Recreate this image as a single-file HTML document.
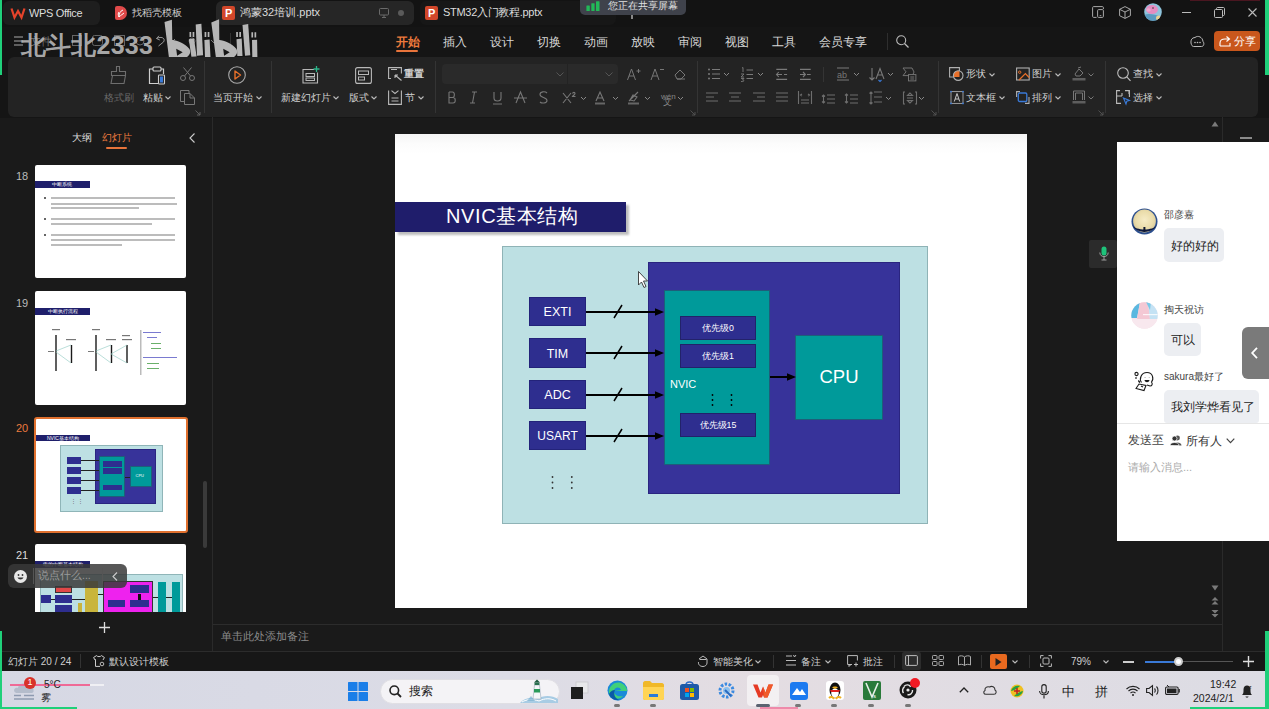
<!DOCTYPE html>
<html><head><meta charset="utf-8">
<style>
*{margin:0;padding:0;box-sizing:border-box}
html,body{width:1269px;height:709px;overflow:hidden;background:#151515;font-family:"Liberation Sans",sans-serif;}
.a{position:absolute}
.t{position:absolute;white-space:nowrap;line-height:1}
svg{position:absolute;overflow:visible}
.ic{fill:none;stroke:#9a9a9a;stroke-width:1.1}
.mn{font-size:12px;color:#d8d8d8;top:36px}
.rb{font-size:10px;color:#d2d2d2}
.sep{position:absolute;width:1px;background:#343434}
.chev{fill:none;stroke:#bbb;stroke-width:1.1}
</style></head><body>
<!-- ===== TITLE BAR ===== -->
<div class="a" style="left:0;top:0;width:1269px;height:27px;background:#131313"></div>
<div class="a" style="left:1190px;top:0;width:70px;height:1px;background:#4a1620"></div>
<div class="a" style="left:0;top:0;width:2px;height:75px;background:#1fd07a"></div>
<div class="a" style="left:1265px;top:0;width:4px;height:75px;background:#1fd07a"></div>
<!-- tab1 -->
<div class="a" style="left:3px;top:1px;width:97px;height:24px;background:#1e1e1e;border-radius:6px"></div>
<svg style="left:11px;top:8px" width="14" height="10" viewBox="0 0 14 10"><path d="M0.5 0.5 L3.5 9.5 L7 3 L10.5 9.5 L13.5 0.5" fill="none" stroke="#e5432b" stroke-width="2.2" stroke-linejoin="miter"/></svg>
<div class="t" style="left:29px;top:8px;font-size:11px;color:#dcdcdc;letter-spacing:-0.35px">WPS Office</div>
<!-- tab2 -->
<div class="a" style="left:115px;top:6px;width:12px;height:14px;background:#e04a4a;border-radius:2px 7px 7px 2px"></div>
<svg style="left:117px;top:9px" width="8" height="9" viewBox="0 0 8 9"><path d="M2 8 C2 5 3 2 6 1 M2 8 C4 6 6 5 7 4 M2 8 C1 6 1 4 2 3" fill="none" stroke="#fff" stroke-width="1"/></svg>
<div class="t" style="left:132px;top:8px;font-size:10px;color:#d0d0d0">找稻壳模板</div>
<!-- tab3 active -->
<div class="a" style="left:216px;top:1px;width:198px;height:24px;background:#262626;border-radius:6px"></div>
<div class="a" style="left:222px;top:6px;width:13px;height:14px;background:#d2472a;border-radius:2px"></div>
<div class="t" style="left:225px;top:8px;font-size:11px;font-weight:bold;color:#fff">P</div>
<div class="t" style="left:240px;top:7px;font-size:11px;color:#dcdcdc">鸿蒙32培训.pptx</div>
<svg style="left:379px;top:8px" width="10" height="10" viewBox="0 0 10 10"><rect x="0.5" y="0.5" width="9" height="6.5" rx="1" fill="none" stroke="#6a6a6a" stroke-width="1"/><path d="M3 9.5 H7 M5 7 V9.5" stroke="#6a6a6a" stroke-width="1"/></svg>
<div class="a" style="left:398px;top:10px;width:6px;height:6px;border-radius:50%;background:#5a5a5a"></div>
<!-- tab4 -->
<div class="a" style="left:420px;top:1px;width:196px;height:24px;background:#171717;border-radius:6px"></div>
<div class="a" style="left:425px;top:6px;width:13px;height:14px;background:#d2472a;border-radius:2px"></div>
<div class="t" style="left:428px;top:8px;font-size:11px;font-weight:bold;color:#fff">P</div>
<div class="t" style="left:443px;top:7px;font-size:11px;color:#dcdcdc;letter-spacing:-0.3px">STM32入门教程.pptx</div>
<!-- sharing popup -->
<div class="a" style="left:580px;top:-4px;width:106px;height:19px;background:#3f424b;border-radius:5px"></div>
<svg style="left:586px;top:1px" width="14" height="11" viewBox="0 0 14 11"><rect x="0.4" y="4.6" width="3.4" height="5.4" rx="0.5" fill="#22b858"/><rect x="5.3" y="2.2" width="3.3" height="7.8" rx="0.5" fill="#22b858"/><rect x="10" y="0.2" width="3.5" height="9.8" rx="0.5" fill="#22b858"/></svg>
<div class="t" style="left:608px;top:1px;font-size:10px;color:#e0e0e0">您正在共享屏幕</div>
<div class="a" style="left:631px;top:15px;width:1.5px;height:4px;background:#888"></div>
<!-- right title icons -->
<svg style="left:1092px;top:6px" width="12" height="12" viewBox="0 0 12 12"><path d="M4.5 11.4 H1.6 C1 11.4 0.6 11 0.6 10.4 V1.6 C0.6 1 1 0.6 1.6 0.6 H10.4 C11 0.6 11.4 1 11.4 1.6 V3" fill="none" stroke="#a8a8a8" stroke-width="1"/><rect x="5.6" y="3.6" width="5.8" height="7.8" rx="1" fill="none" stroke="#a8a8a8" stroke-width="1"/><path d="M7.7 9.6 H9.3" stroke="#a8a8a8" stroke-width="0.9"/></svg>
<svg style="left:1118.5px;top:6px" width="12" height="13" viewBox="0 0 12 13"><path d="M6 0.6 L11.4 3.3 V9.7 L6 12.4 L0.6 9.7 V3.3 Z M0.6 3.3 L6 6 L11.4 3.3 M6 6 V12.4" fill="none" stroke="#a8a8a8" stroke-width="1" stroke-linejoin="round"/></svg>
<svg style="left:1143.5px;top:3px" width="18" height="18" viewBox="0 0 18 18"><defs><clipPath id="avt"><circle cx="9" cy="9" r="8.8"/></clipPath></defs><g clip-path="url(#avt)"><rect width="18" height="18" fill="#8ec4dc"/><path d="M0 12 C4 10 10 11 18 14 V18 H0 Z" fill="#5a9ac0"/><ellipse cx="8" cy="6.5" rx="6" ry="4.5" fill="#e48cc0"/><ellipse cx="4.5" cy="7" rx="2.2" ry="1.8" fill="#f0a8d0"/><circle cx="9" cy="5" r="0.8" fill="#333"/><circle cx="14.5" cy="15" r="2.5" fill="#e8d090"/></g></svg>
<div class="a" style="left:1182px;top:11.5px;width:8.5px;height:1px;background:#bbb"></div>
<svg style="left:1213.5px;top:6.5px" width="11" height="11" viewBox="0 0 11 11"><rect x="0.5" y="2.5" width="8" height="8" rx="1" fill="none" stroke="#bbb" stroke-width="1"/><path d="M2.5 2.5 V1.5 C2.5 1 3 0.5 3.5 0.5 H9.5 C10 0.5 10.5 1 10.5 1.5 V7.5 C10.5 8 10 8.5 9.5 8.5 H8.5" fill="none" stroke="#bbb" stroke-width="1"/></svg>
<svg style="left:1248px;top:8px" width="9" height="9" viewBox="0 0 9 9"><path d="M0.5 0.5 L8.5 8.5 M8.5 0.5 L0.5 8.5" stroke="#bbb" stroke-width="1.1"/></svg>

<!-- ===== MENU ROW ===== -->
<svg style="left:14px;top:36px" width="9" height="10" viewBox="0 0 9 10"><path d="M0 1H9M0 5H9M0 9H9" stroke="#aaa" stroke-width="1.2"/></svg>
<div class="t" style="left:30px;top:36px;font-size:11px;color:#777">文件</div>
<svg style="left:72px;top:35px" width="80" height="12" viewBox="0 0 80 12"><rect x="0.5" y="0.5" width="9" height="10" fill="none" stroke="#666" stroke-width="1"/><rect x="20.5" y="0.5" width="10" height="10" rx="2" fill="none" stroke="#666"/><rect x="42.5" y="0.5" width="10" height="10" fill="none" stroke="#666"/><circle cx="68" cy="6" r="4" fill="none" stroke="#666"/></svg>
<svg style="left:155px;top:35px" width="70" height="12" viewBox="0 0 70 12"><path d="M1.5 3.5 L4 0.8 M1.5 3.5 L4.8 5 M1.5 3.5 C6 1 11 3 8.5 7 L3.5 11" fill="none" stroke="#999" stroke-width="1"/><path d="M16 4 L18 6 L20 4" fill="none" stroke="#888" stroke-width="0.9"/><circle cx="37" cy="6" r="3" fill="none" stroke="#666"/><path d="M56 5 L59 8 L62 5" fill="none" stroke="#888" stroke-width="0.9"/></svg>
<div class="a" style="left:230px;top:33px;width:1px;height:17px;background:#333"></div>
<!-- watermark -->
<div class="t" style="left:21px;top:33px;font-size:25px;font-weight:900;color:rgba(182,182,182,0.93);letter-spacing:0.2px">北斗北2333</div>
<svg style="left:155px;top:15px" width="110" height="50" viewBox="0 0 110 50" fill="#b6b6b6" fill-rule="evenodd">
<path d="M9.5 7 L16.9 4.8 L17.3 25 C22 25.5 30 28 34.5 34 C36 37 35 41 30 43 C25 45 18 45.5 14.3 45.5 Z M21.2 33.8 L27.7 37.3 L22.1 40.7 Z"/>
<path d="M34.5 17 H36.2 V22 H34.5 Z M37.6 17 H39.3 V22 H37.6 Z M33.8 24.3 L39 23.4 L41.6 41.6 L36.4 41.8 Z"/>
<path d="M40.7 9.5 L46.4 8.7 L48.1 40.3 L42 40.7 Z"/>
<path d="M49.6 17 H51.3 V22 H49.6 Z M52.7 17 H54.4 V22 H52.7 Z M49.4 25 L54.6 24.6 L55.5 42.3 L50 42.5 Z"/>
<path d="M56.3 7.4 L64.1 4.3 L64.3 25 C69 25.5 77 28 81.5 34 C83 37 82 41 77 43 C72 45 65 45.5 61.3 45.5 Z M68.2 33.8 L74.7 37.3 L69.1 40.7 Z"/>
<path d="M81.2 17 H82.9 V22 H81.2 Z M84.3 17 H86 V22 H84.3 Z M81.5 24.3 L86.7 23.6 L87.5 40.9 L82.3 41 Z"/>
<path d="M87.5 10 L93.2 9.1 L95.3 40.3 L90 40.7 Z"/>
<path d="M96.4 17.3 H98.1 V22.5 H96.4 Z M99.5 17.3 H101.2 V22.5 H99.5 Z M97 25 L102.1 24.7 L102.4 42.3 L97.3 42.5 Z"/>
</svg>
<!-- menu items -->
<div class="t mn" style="left:396px;color:#ee7a3c;font-weight:bold">开始</div>
<div class="a" style="left:396px;top:50px;width:22px;height:2px;background:#e8743b;border-radius:1px"></div>
<div class="t mn" style="left:443px">插入</div>
<div class="t mn" style="left:490px">设计</div>
<div class="t mn" style="left:537px">切换</div>
<div class="t mn" style="left:584px">动画</div>
<div class="t mn" style="left:631px">放映</div>
<div class="t mn" style="left:678px">审阅</div>
<div class="t mn" style="left:725px">视图</div>
<div class="t mn" style="left:772px">工具</div>
<div class="t mn" style="left:819px">会员专享</div>
<div class="a" style="left:887px;top:33px;width:1px;height:17px;background:#2e2e2e"></div>
<svg style="left:896px;top:35px" width="13" height="13" viewBox="0 0 13 13"><circle cx="5.2" cy="5.2" r="4.5" fill="none" stroke="#bbb" stroke-width="1.1"/><path d="M8.5 8.5 L12.5 12.5" stroke="#bbb" stroke-width="1.2"/></svg>
<svg style="left:1190px;top:35px" width="15" height="12" viewBox="0 0 15 12"><path d="M3.5 11.5 H11.5 C14 11.5 14.5 8 13 6.5 C12.5 2 8 0 5 2.5 C2 2.5 0.5 5 1 8 C1.5 10.5 2.5 11.5 3.5 11.5 Z" fill="none" stroke="#bbb" stroke-width="1"/><circle cx="5" cy="7.5" r="0.8" fill="#bbb"/><circle cx="7.5" cy="7.5" r="0.8" fill="#bbb"/><circle cx="10" cy="7.5" r="0.8" fill="#bbb"/></svg>
<div class="a" style="left:1214px;top:31px;width:46px;height:20px;background:#c9571c;border-radius:4px"></div>
<svg style="left:1219px;top:35px" width="12" height="12" viewBox="0 0 12 12"><path d="M1 11 V8 C1 5 3 4 6 4 H10 M7.5 1.5 L10.5 4 L7.5 6.5 M1 11 H11 V8" fill="none" stroke="#fff" stroke-width="1.1"/></svg>
<div class="t" style="left:1234px;top:36px;font-size:11px;color:#fff">分享</div>
<!-- ===== RIBBON ===== -->
<div class="a" style="left:8px;top:57px;width:1250px;height:60px;background:#232323;border-radius:6px"></div>
<div class="sep" style="left:204px;top:61px;height:52px"></div>
<div class="sep" style="left:271px;top:61px;height:52px"></div>
<div class="sep" style="left:435px;top:61px;height:52px"></div>
<div class="sep" style="left:697px;top:61px;height:52px"></div>
<div class="sep" style="left:823px;top:67px;height:15px"></div>
<div class="sep" style="left:938px;top:61px;height:52px"></div>
<div class="sep" style="left:1105px;top:61px;height:52px"></div>
<svg style="left:195px;top:110px" width="6" height="6" viewBox="0 0 6 6"><path d="M0.5 0.5 L5 5 M5 2 V5 H2" fill="none" stroke="#666" stroke-width="0.9"/></svg>
<svg style="left:690px;top:110px" width="6" height="6" viewBox="0 0 6 6"><path d="M0.5 0.5 L5 5 M5 2 V5 H2" fill="none" stroke="#555" stroke-width="0.9"/></svg>
<svg style="left:931px;top:110px" width="6" height="6" viewBox="0 0 6 6"><path d="M0.5 0.5 L5 5 M5 2 V5 H2" fill="none" stroke="#555" stroke-width="0.9"/></svg>
<svg style="left:1098px;top:110px" width="6" height="6" viewBox="0 0 6 6"><path d="M0.5 0.5 L5 5 M5 2 V5 H2" fill="none" stroke="#555" stroke-width="0.9"/></svg>
<!-- format painter -->
<svg style="left:110px;top:66px" width="17" height="18" viewBox="0 0 17 18"><path d="M6.5 0.5 H9.5 V5.5 H15.5 V9.5 H1.5 V5.5 H6.5 Z M2.5 9.5 L1 17.5 H14 L15.5 9.5" fill="none" stroke="#6e6e6e" stroke-width="1.1"/></svg>
<div class="t rb" style="left:104px;top:93px;color:#6a6a6a">格式刷</div>
<!-- paste -->
<svg style="left:148px;top:66px" width="19" height="19" viewBox="0 0 19 19"><path d="M5 3 H1.5 V17.5 H10 M13 3 H15.5 V8" fill="none" stroke="#cfcfcf" stroke-width="1.2"/><rect x="5" y="1" width="8" height="4" rx="1" fill="none" stroke="#cfcfcf" stroke-width="1.1"/><rect x="10.5" y="9" width="6" height="9" rx="0.8" fill="none" stroke="#cfcfcf" stroke-width="1.1"/><rect x="12" y="10.5" width="3" height="6" fill="#3a7ad8"/></svg>
<div class="t rb" style="left:143px;top:93px">粘贴</div>
<svg style="left:165px;top:96px" width="6" height="4" viewBox="0 0 6 4"><path class="chev" d="M0.5 0.5 L3 3 L5.5 0.5"/></svg>
<!-- scissors / copy -->
<svg style="left:180px;top:67px" width="15" height="14" viewBox="0 0 15 14"><circle cx="3" cy="11" r="2.5" fill="none" stroke="#777" stroke-width="1"/><circle cx="12" cy="11" r="2.5" fill="none" stroke="#777" stroke-width="1"/><path d="M4.5 9 L11.5 0.5 M10.5 9 L3.5 0.5" stroke="#777" stroke-width="1"/></svg>
<svg style="left:180px;top:90px" width="15" height="15" viewBox="0 0 15 15"><path d="M9 3.5 V0.5 H0.5 V11.5 H4" fill="none" stroke="#777" stroke-width="1"/><path d="M4.5 3.5 H10 L14.5 8 V14.5 H4.5 Z M10 3.5 V8 H14.5" fill="none" stroke="#777" stroke-width="1"/></svg>
<!-- play from current -->
<svg style="left:228px;top:66px" width="18" height="18" viewBox="0 0 18 18"><circle cx="9" cy="9" r="8.3" fill="none" stroke="#aaa" stroke-width="1.1"/><path d="M7 5 L12.5 9 L7 13 Z" fill="none" stroke="#e8702a" stroke-width="1.4" stroke-linejoin="round"/></svg>
<div class="t rb" style="left:213px;top:93px">当页开始</div>
<svg style="left:256px;top:96px" width="6" height="4" viewBox="0 0 6 4"><path class="chev" d="M0.5 0.5 L3 3 L5.5 0.5"/></svg>
<!-- new slide -->
<svg style="left:302px;top:66px" width="18" height="18" viewBox="0 0 18 18"><path d="M12 3.5 H1 V17 H15.5 V6.5" fill="none" stroke="#b8b8b8" stroke-width="1.1"/><rect x="4" y="7.5" width="8.5" height="3" fill="none" stroke="#b8b8b8" stroke-width="1"/><rect x="4" y="12" width="8.5" height="2.5" fill="none" stroke="#b8b8b8" stroke-width="1"/><path d="M14.5 0 V6 M11.5 3 H17.5" stroke="#2ab58a" stroke-width="1.3"/></svg>
<div class="t rb" style="left:281px;top:93px">新建幻灯片</div>
<svg style="left:333px;top:96px" width="6" height="4" viewBox="0 0 6 4"><path class="chev" d="M0.5 0.5 L3 3 L5.5 0.5"/></svg>
<!-- layout -->
<svg style="left:355px;top:67px" width="17" height="17" viewBox="0 0 17 17"><rect x="0.6" y="0.6" width="15.8" height="15.8" rx="2" fill="none" stroke="#b8b8b8" stroke-width="1.1"/><rect x="3.5" y="4" width="10" height="3.5" fill="none" stroke="#b8b8b8" stroke-width="1"/><rect x="3.5" y="10" width="6" height="3" fill="none" stroke="#b8b8b8" stroke-width="1"/></svg>
<div class="t rb" style="left:349px;top:93px">版式</div>
<svg style="left:371px;top:96px" width="6" height="4" viewBox="0 0 6 4"><path class="chev" d="M0.5 0.5 L3 3 L5.5 0.5"/></svg>
<!-- reset / section -->
<svg style="left:388px;top:67px" width="15" height="14" viewBox="0 0 15 14"><path d="M3 11.5 H0.6 V0.6 H13.4 V6.5" fill="none" stroke="#b8b8b8" stroke-width="1.1"/><path d="M3 2.5 H9" stroke="#b8b8b8"/><path d="M13.5 13.5 L7 8 M7 8 V11 M7 8 H10" fill="none" stroke="#b8b8b8" stroke-width="1.1"/></svg>
<div class="t rb" style="left:404px;top:69px;font-weight:bold">重置</div>
<svg style="left:388px;top:90px" width="14" height="15" viewBox="0 0 14 15"><path d="M0.6 0.5 V14.4 H13.4 V0.5 M3.5 0.6 L7 3.5 L10.5 0.6" fill="none" stroke="#b8b8b8" stroke-width="1.1"/><path d="M3.5 8 H10.5 M3.5 11 H10.5" stroke="#b8b8b8"/></svg>
<div class="t rb" style="left:405px;top:93px">节</div>
<svg style="left:418px;top:96px" width="6" height="4" viewBox="0 0 6 4"><path class="chev" d="M0.5 0.5 L3 3 L5.5 0.5"/></svg>
<!-- font boxes -->
<div class="a" style="left:442px;top:64px;width:176px;height:20px;background:#2a2a2a;border-radius:4px"></div>
<div class="a" style="left:567px;top:64px;width:1px;height:20px;background:#232323"></div>
<svg style="left:556px;top:72px" width="8" height="5" viewBox="0 0 8 5"><path d="M0.5 0.5 L4 4 L7.5 0.5" fill="none" stroke="#555" stroke-width="1"/></svg>
<svg style="left:605px;top:72px" width="8" height="5" viewBox="0 0 8 5"><path d="M0.5 0.5 L4 4 L7.5 0.5" fill="none" stroke="#555" stroke-width="1"/></svg>
<svg style="left:627px;top:67px" width="60" height="14" viewBox="0 0 60 14"><path d="M0.5 13 L4.5 2 L8.5 13 M2 9 H7 M9.5 4 H13.5 M11.5 2 V6" fill="none" stroke="#777" stroke-width="1"/><path d="M24 13 L28 2 L32 13 M25.5 9 H30.5 M33 2.5 H37" fill="none" stroke="#777" stroke-width="1"/><path d="M48 8 L53 3 L58 8 L54 12 H50 Z M50 12 H58" fill="none" stroke="#777" stroke-width="1"/></svg>
<!-- row2 font formatting -->
<svg style="left:447px;top:91px" width="240" height="14" viewBox="0 0 240 14">
<g fill="none" stroke="#777" stroke-width="1.1">
<path d="M2 1 V12 H6 C9 12 9 6.5 6 6.5 H2 M2 6.5 H5.5 C8 6.5 8 1 5.5 1 H2"/>
<path d="M25 1 H30 M23 12 H28 M27.5 1 L25.5 12"/>
<path d="M47 1 V7 C47 11 54 11 54 7 V1 M46 13 H55"/>
<path d="M69 12 L73.5 1 L78 12 M67 7 H80"/>
<path d="M100 2 C98 0 93 0.5 93 3.5 C93 7 100 6 100 9.5 C100 12.5 94.5 12.5 93 11"/>
<path d="M116 2 L124 12 M124 2 L116 12 M125.5 2.5 C126 1 128 1 128 2.5 C128 3.5 126 4.5 125.5 5.5 H128.5"/>
<path d="M149 10 L153 1 L157 10 M150.5 7 H155.5"/>
<path d="M183 9 L186 4 L190 6 L187 10 Z M182 10 L191 1"/>
</g>
<rect x="148" y="11.5" width="10" height="2" fill="#666"/>
<rect x="181" y="11.5" width="11" height="2" fill="#666"/>
<path d="M134 6 L136.5 8.5 L139 6 M166 6 L168.5 8.5 L171 6 M198 6 L200.5 8.5 L203 6 M231 6 L233.5 8.5 L236 6" fill="none" stroke="#888" stroke-width="1"/>
<text x="214" y="8" font-size="8" fill="#888" font-family="Liberation Sans">wén</text>
<text x="216" y="14" font-size="9" fill="#888">文</text>
</svg>
<!-- paragraph row1 -->
<svg style="left:706px;top:67px" width="220" height="15" viewBox="0 0 220 15">
<g fill="none" stroke="#7a7a7a" stroke-width="1.1">
<path d="M6 2.5 H14 M6 7 H14 M6 11.5 H14"/>
<path d="M40.5 3 H47 M40.5 7.5 H47 M40.5 11.5 H47"/>
<path d="M70.3 2.4 H81.1 M70.3 12.4 H81.1 M70.8 7.5 H76 M72.8 5 L70.5 7.5 L72.8 10 M78 7.5 H81.1"/>
<path d="M94 2.4 H104.7 M94 12.4 H104.7 M94 7.5 H99.2 M97 5 L99.4 7.5 L97 10 M101 7.5 H104.7"/>
<path d="M131 1 H143 M131 13 H143"/>
<path d="M166 1 V13 M163.5 10.5 L166 13 L168.5 10.5"/>
<path d="M170 12 L174 1.5 L178 12 M171.5 8 H176.5"/>
<path d="M197 1 H206 L208 5 L206.5 8.6 H197 L200 4.8 Z" stroke-width="0.9"/><rect x="202.5" y="7.6" width="7.4" height="6.3" fill="#232323" stroke-width="0.9"/><path d="M204.3 10 H208.2 M204.3 12 H208.2" stroke-width="0.9"/>
</g>
<g fill="#7a7a7a"><circle cx="3" cy="2.5" r="1"/><circle cx="3" cy="7" r="1"/><circle cx="3" cy="11.5" r="1"/></g>
<path d="M36 1 L37 0.5 V5 M35 7 H38 L35 10 H38 M35 11.5 H38 L36.5 13 C38.5 13 38.5 15 35 14.5" fill="none" stroke="#7a7a7a" stroke-width="0.9"/>
<text x="131" y="10.5" font-size="9" fill="#777">ab</text>
<path d="M172.5 13 L174 14.5 L175.5 13" fill="none" stroke="#3a7ad8" stroke-width="1.1"/>
<path d="M18 6 L20.5 8.5 L23 6 M52 6 L54.5 8.5 L57 6 M148 6 L150.5 8.5 L153 6 M182 6 L184.5 8.5 L187 6" fill="none" stroke="#888" stroke-width="1"/>
</svg>
<!-- paragraph row2 -->
<svg style="left:706px;top:91px" width="220" height="14" viewBox="0 0 220 14">
<g fill="none" stroke="#6e6e6e" stroke-width="1.1">
<path d="M0 2 H12 M0 6 H8 M0 10 H12"/>
<path d="M23 2 H35 M25 6 H33 M23 10 H35"/>
<path d="M47 2 H59 M51 6 H59 M47 10 H59"/>
<path d="M70 2 H82 M70 6 H82 M70 10 H82"/>
<path d="M92.5 0 V13 M105.5 0 V13 M95 9 H103 M95 12 H103 M96 3 L94.5 4 L96 5 M102 3 L103.5 4 L102 5"/>
<path d="M121 4 H129 M121 8 H129 M121 12 H129 M117.5 4 V12 M116 5.5 L117.5 4 L119 5.5 M116 10.5 L117.5 12 L119 10.5"/>
<path d="M144 4 H152 M144 8 H152 M144 12 H152 M140.5 3 V12 M139 10.5 L140.5 12 L142 10.5 M139 4.5 L140.5 3 L142 4.5"/>
<path d="M168 1 H176 M168 6 H176 M168 11 H176 M165 1 V13 M163.5 2.5 L165 1 L166.5 2.5 M163.5 11.5 L165 13 L166.5 11.5"/>
<path d="M199 1 H197.5 V13 H199 M209 1 H210.5 V13 H209 M201 7 H207 M204 2 L201.5 4.5 H206.5 Z M204 12 L201.5 9.5 H206.5 Z"/>
</g>
<path d="M180 6 L182.5 8.5 L185 6 M213 6 L215.5 8.5 L218 6" fill="none" stroke="#888" stroke-width="1"/>
</svg>
<!-- insert group -->
<svg style="left:949px;top:67px" width="16" height="15" viewBox="0 0 16 15"><defs><clipPath id="cq"><rect x="0.5" y="0.5" width="10" height="9.5"/></clipPath></defs><circle cx="9.2" cy="8.6" r="4.8" fill="#e8702a" clip-path="url(#cq)"/><path d="M4.5 10 H0.6 V0.6 H10.4 V4" fill="none" stroke="#b0b0b0" stroke-width="1.1"/><circle cx="9.2" cy="8.6" r="4.8" fill="none" stroke="#b0b0b0" stroke-width="1.1"/></svg>
<div class="t rb" style="left:966px;top:69px">形状</div>
<svg style="left:989px;top:73px" width="6" height="4" viewBox="0 0 6 4"><path class="chev" d="M0.5 0.5 L3 3 L5.5 0.5"/></svg>
<svg style="left:1016px;top:67px" width="14" height="14" viewBox="0 0 14 14"><rect x="0.6" y="1" width="12.6" height="12" fill="none" stroke="#b0b0b0" stroke-width="1.1"/><circle cx="3.7" cy="5.2" r="1.2" fill="none" stroke="#e8702a" stroke-width="1"/><path d="M3 13 L9.4 6.6 L13.2 10.5" fill="none" stroke="#e8702a" stroke-width="1.3"/></svg>
<div class="t rb" style="left:1032px;top:69px">图片</div>
<svg style="left:1055px;top:73px" width="6" height="4" viewBox="0 0 6 4"><path class="chev" d="M0.5 0.5 L3 3 L5.5 0.5"/></svg>
<svg style="left:1072px;top:67px" width="14" height="15" viewBox="0 0 14 15"><path d="M3 7 L7 2 L11 6 L8 9 H4 Z M6 1 L9 0" fill="none" stroke="#777" stroke-width="1"/><rect x="0.5" y="11" width="13" height="2.5" fill="#5e5e5e"/></svg>
<svg style="left:1088px;top:73px" width="6" height="4" viewBox="0 0 6 4"><path d="M0.5 0.5 L3 3 L5.5 0.5" fill="none" stroke="#777" stroke-width="1"/></svg>
<svg style="left:950px;top:91px" width="14" height="13" viewBox="0 0 14 13"><rect x="1" y="0.6" width="12" height="11.8" fill="none" stroke="#a8a8a8" stroke-width="0.9"/><path d="M4.3 10.5 L7 2.5 L9.7 10.5 M5.2 8 H8.8" fill="none" stroke="#c8c8c8" stroke-width="1"/><g fill="#3a7ad8"><circle cx="1" cy="0.6" r="0.9"/><circle cx="13" cy="0.6" r="0.9"/><circle cx="1" cy="12.4" r="0.9"/><circle cx="13" cy="12.4" r="0.9"/></g></svg>
<div class="t rb" style="left:966px;top:93px">文本框</div>
<svg style="left:999px;top:96px" width="6" height="4" viewBox="0 0 6 4"><path class="chev" d="M0.5 0.5 L3 3 L5.5 0.5"/></svg>
<svg style="left:1016px;top:91px" width="14" height="13" viewBox="0 0 14 13"><path d="M4 0.6 H0.6 V6" fill="none" stroke="#b0b0b0" stroke-width="1.1"/><rect x="2.3" y="2" width="8.5" height="8.5" rx="1.3" fill="none" stroke="#3a7ad8" stroke-width="1.3"/><path d="M13 6 V12.4 H9" fill="none" stroke="#b0b0b0" stroke-width="1.1"/></svg>
<div class="t rb" style="left:1032px;top:93px">排列</div>
<svg style="left:1055px;top:96px" width="6" height="4" viewBox="0 0 6 4"><path class="chev" d="M0.5 0.5 L3 3 L5.5 0.5"/></svg>
<svg style="left:1072px;top:90px" width="14" height="15" viewBox="0 0 14 15"><path d="M1.5 10 V1 H12.5 V10 M3.5 10 V3 H10.5 V10" fill="none" stroke="#777" stroke-width="1"/><rect x="0.5" y="11" width="13" height="2.5" fill="#5e5e5e"/></svg>
<svg style="left:1088px;top:96px" width="6" height="4" viewBox="0 0 6 4"><path d="M0.5 0.5 L3 3 L5.5 0.5" fill="none" stroke="#777" stroke-width="1"/></svg>
<!-- find / select -->
<svg style="left:1117px;top:67px" width="14" height="15" viewBox="0 0 14 15"><circle cx="6" cy="6" r="5.3" fill="none" stroke="#bbb" stroke-width="1.1"/><path d="M9.8 9.8 L13.5 13.8" stroke="#bbb" stroke-width="1.2"/></svg>
<div class="t rb" style="left:1133px;top:69px">查找</div>
<svg style="left:1156px;top:73px" width="6" height="4" viewBox="0 0 6 4"><path class="chev" d="M0.5 0.5 L3 3 L5.5 0.5"/></svg>
<svg style="left:1116px;top:90px" width="14" height="15" viewBox="0 0 14 15"><path d="M4 0.6 H0.6 V13.4 H5 M9 0.6 H13.4 V7 M0.6 6 H6 M6 6 V3 M13 0.6 V4" fill="none" stroke="#bbb" stroke-width="1.1"/><path d="M7.5 8 L13.5 10.5 L10.8 11.3 L10 14 Z" fill="none" stroke="#3a7ad8" stroke-width="1.1"/></svg>
<div class="t rb" style="left:1133px;top:93px">选择</div>
<svg style="left:1156px;top:96px" width="6" height="4" viewBox="0 0 6 4"><path class="chev" d="M0.5 0.5 L3 3 L5.5 0.5"/></svg>
<!-- ===== MAIN AREA ===== -->
<div class="a" style="left:0;top:117px;width:1269px;height:554px;background:#1a1a1a"></div>
<div class="a" style="left:0;top:117px;width:1269px;height:1px;background:#151515"></div>
<div class="a" style="left:212px;top:117px;width:1px;height:534px;background:#2a2a2a"></div>
<div class="a" style="left:1222px;top:117px;width:1px;height:534px;background:#2a2a2a"></div>
<div class="a" style="left:213px;top:624px;width:1009px;height:1px;background:#2c2c2c"></div>
<div class="a" style="left:0;top:651px;width:1269px;height:1px;background:#2c2c2c"></div>
<!-- scroll arrows -->
<svg style="left:1211px;top:121px" width="8" height="6" viewBox="0 0 8 6"><path d="M4 0.5 L7.5 5.5 H0.5 Z" fill="#7a7a7a"/></svg>
<svg style="left:1211px;top:585px" width="8" height="6" viewBox="0 0 8 6"><path d="M4 5.5 L7.5 0.5 H0.5 Z" fill="#7a7a7a"/></svg>
<svg style="left:1211px;top:597px" width="8" height="8" viewBox="0 0 8 8"><path d="M4 0 L7.5 3.5 H0.5 Z M4 4 L7.5 7.5 H0.5 Z" fill="#7a7a7a"/></svg>
<svg style="left:1211px;top:610px" width="8" height="8" viewBox="0 0 8 8"><path d="M4 3.5 L7.5 0 H0.5 Z M4 7.5 L7.5 4 H0.5 Z" fill="#7a7a7a"/></svg>
<div class="a" style="left:1240px;top:137px;width:12px;height:2px;background:#8a8a8a"></div>
<!-- notes -->
<div class="t" style="left:221px;top:631px;font-size:11px;color:#8c8c8c">单击此处添加备注</div>

<!-- ===== LEFT PANEL ===== -->
<div class="t" style="left:72px;top:133px;font-size:10px;color:#dcdcdc">大纲</div>
<div class="t" style="left:102px;top:133px;font-size:10px;color:#ec7a3e">幻灯片</div>
<div class="a" style="left:106px;top:147px;width:21px;height:2px;background:#e8743b;border-radius:1px"></div>
<svg style="left:189px;top:133px" width="6" height="10" viewBox="0 0 6 10"><path d="M5.5 0.5 L1 5 L5.5 9.5" fill="none" stroke="#ccc" stroke-width="1.1"/></svg>
<div class="t" style="left:16px;top:171px;font-size:11px;color:#bbb">18</div>
<div class="t" style="left:16px;top:298px;font-size:11px;color:#bbb">19</div>
<div class="t" style="left:16px;top:423px;font-size:11px;color:#ec7a3e">20</div>
<div class="t" style="left:16px;top:550px;font-size:11px;color:#ddd">21</div>
<div class="a" style="left:203px;top:481px;width:4px;height:67px;background:#3a3a3a;border-radius:2px"></div>
<!-- thumb 18 -->
<div class="a" style="left:35px;top:165px;width:151px;height:113px;background:#fff;border-radius:2px;overflow:hidden">
 <div class="a" style="left:0;top:16px;width:55px;height:7px;background:#1f1f6b"></div>
 <div class="t" style="left:17px;top:17px;font-size:5px;color:#fff">中断系统</div>
 <div class="a" style="left:9px;top:32.4px;width:1.5px;height:1.5px;background:#666"></div>
 <div class="a" style="left:9px;top:53.4px;width:1.5px;height:1.5px;background:#666"></div>
 <div class="a" style="left:9px;top:69.2px;width:1.5px;height:1.5px;background:#666"></div>
 <div class="a" style="left:16.3px;top:32px;width:123.7px;height:2.2px;background:#bcbcbc"></div>
 <div class="a" style="left:16.3px;top:37.5px;width:125.6px;height:2.2px;background:#bcbcbc"></div>
 <div class="a" style="left:16.3px;top:42.2px;width:88px;height:2.2px;background:#bcbcbc"></div>
 <div class="a" style="left:16.3px;top:53px;width:123.7px;height:2.2px;background:#bcbcbc"></div>
 <div class="a" style="left:16.3px;top:58.2px;width:100.7px;height:2.2px;background:#bcbcbc"></div>
 <div class="a" style="left:16.3px;top:68.8px;width:123.7px;height:2.2px;background:#bcbcbc"></div>
 <div class="a" style="left:16.3px;top:74.1px;width:123.7px;height:2.2px;background:#bcbcbc"></div>
 <div class="a" style="left:16.3px;top:79.2px;width:70.6px;height:2.2px;background:#bcbcbc"></div>
</div>
<!-- thumb 19 -->
<div class="a" style="left:35px;top:291px;width:151px;height:114px;background:#fff;border-radius:2px;overflow:hidden">
 <div class="a" style="left:0;top:17px;width:55px;height:7px;background:#1f1f6b"></div>
 <div class="t" style="left:13px;top:18px;font-size:5px;color:#fff">中断执行流程</div>
 <svg style="left:0;top:0" width="151" height="114" viewBox="0 0 151 114">
  <g stroke="#1a1a1a" stroke-width="1.4"><path d="M21 44 V80 M36.5 54 V72 M61 44 V80 M76.5 54 V72 M92 54 V72"/></g>
  <g stroke="#8cc8c0" stroke-width="0.6" fill="none"><path d="M21 60 L36 54 M21 61 L36 72 M61 60 L76 54 M61 61 L76 72 M76 63 L92 54 M76 63 L92 72"/></g>
  <g fill="#777"><rect x="17" y="38" width="8" height="1.2"/><rect x="31" y="48" width="10" height="1.2"/><rect x="57" y="38" width="8" height="1.2"/><rect x="71" y="48" width="10" height="1.2"/><rect x="87" y="44" width="8" height="1.2"/><rect x="87" y="48" width="10" height="1.2"/><rect x="13" y="60" width="6" height="1"/><rect x="53" y="60" width="6" height="1"/></g>
  <rect x="105" y="39" width="1.5" height="45" fill="#bbb"/>
  <g fill="#7a7ad0"><rect x="108" y="41" width="18" height="1"/><rect x="112" y="46" width="10" height="1"/><rect x="108" y="66" width="34" height="1"/></g>
  <g fill="#6ab06a"><rect x="116" y="52" width="10" height="1"/><rect x="116" y="57" width="10" height="1"/><rect x="112" y="72" width="12" height="1"/><rect x="112" y="77" width="12" height="1"/></g>
 </svg>
</div>
<!-- thumb 20 (selected) -->
<div class="a" style="left:34px;top:417px;width:154px;height:116px;border:2px solid #e0702e;border-radius:3px;background:#fff;overflow:hidden">
 <div class="a" style="left:0;top:16px;width:54px;height:6px;background:#1f1f6b"></div>
 <div class="t" style="left:11px;top:16.5px;font-size:5px;color:#fff">NVIC基本结构</div>
 <div class="a" style="left:24.2px;top:25.5px;width:102.5px;height:67.4px;background:#bde0e3;border:0.5px solid #8fb5b8"></div>
 <div class="a" style="left:59.4px;top:29.6px;width:60.6px;height:55.7px;background:#37339a;border:0.5px solid #2a2580"></div>
 <div class="a" style="left:63.2px;top:36.7px;width:26px;height:41.7px;background:#009a9a;border:0.5px solid #1e5e7a"></div>
 <div class="a" style="left:67.2px;top:42.3px;width:18.8px;height:6.2px;background:#2e2e8f"></div>
 <div class="a" style="left:67.2px;top:49.4px;width:18.8px;height:5.8px;background:#2e2e8f"></div>
 <div class="a" style="left:67.2px;top:65.7px;width:18.8px;height:5.5px;background:#2e2e8f"></div>
 <div class="a" style="left:94.4px;top:47.2px;width:21.2px;height:20.7px;background:#009a9a;border:0.5px solid #1e5e7a"></div>
 <div class="t" style="left:99.5px;top:55px;font-size:4px;color:#fff">CPU</div>
 <div class="a" style="left:30.9px;top:37.8px;width:14px;height:7.2px;background:#2e2e8f"></div>
 <div class="a" style="left:30.9px;top:47.8px;width:14px;height:7.2px;background:#2e2e8f"></div>
 <div class="a" style="left:30.9px;top:57.9px;width:14px;height:7.2px;background:#2e2e8f"></div>
 <div class="a" style="left:30.9px;top:67.5px;width:14px;height:7.2px;background:#2e2e8f"></div>
 <div class="a" style="left:44.9px;top:41px;width:18.3px;height:0.8px;background:#222"></div>
 <div class="a" style="left:44.9px;top:51px;width:18.3px;height:0.8px;background:#222"></div>
 <div class="a" style="left:44.9px;top:61px;width:18.3px;height:0.8px;background:#222"></div>
 <div class="a" style="left:44.9px;top:71px;width:18.3px;height:0.8px;background:#222"></div>
 <div class="a" style="left:89.2px;top:57.5px;width:5.2px;height:0.8px;background:#222"></div>
 <div class="t" style="left:35px;top:80px;font-size:5px;color:#666;letter-spacing:2px">⋮⋮</div>
</div>
<!-- thumb 21 -->
<div class="a" style="left:35px;top:544px;width:151px;height:68px;background:#fff;border-radius:2px 2px 0 0;overflow:hidden">
 <div class="a" style="left:0;top:17px;width:55px;height:6.5px;background:#1f1f6b"></div>
 <div class="t" style="left:8px;top:18px;font-size:5px;color:#fff">电的中断基本结构</div>
 <div class="a" style="left:5px;top:29.5px;width:143px;height:40px;background:#bde0e3;border:0.5px solid #8fb5b8"></div>
 <div class="a" style="left:6.2px;top:51.3px;width:10px;height:8.2px;background:#2e2e8f"></div>
 <div class="a" style="left:19.6px;top:41.7px;width:17.2px;height:7.8px;background:#e04848;border:0.5px solid #333"></div>
 <div class="a" style="left:19.6px;top:51.3px;width:17.2px;height:8.2px;background:#2e2e8f"></div>
 <div class="a" style="left:19.6px;top:61px;width:17.2px;height:8px;background:#2e2e8f"></div>
 <div class="a" style="left:16.2px;top:55px;width:3.4px;height:1px;background:#222"></div>
 <div class="a" style="left:36.8px;top:55px;width:13.6px;height:1px;background:#222"></div>
 <div class="a" style="left:50.4px;top:37px;width:12.6px;height:32px;background:#c9b53c"></div>
 <div class="a" style="left:43px;top:59px;width:4px;height:10px;background:#c9b53c"></div>
 <div class="a" style="left:63px;top:50px;width:5.2px;height:1px;background:#222"></div>
 <div class="a" style="left:68.2px;top:37.2px;width:50.2px;height:32px;background:#ee22ee;border:0.6px solid #333"></div>
 <div class="a" style="left:95px;top:41.3px;width:19px;height:8.2px;background:#2e2e8f"></div>
 <div class="a" style="left:95px;top:55.7px;width:19px;height:7.8px;background:#2e2e8f"></div>
 <div class="a" style="left:72.7px;top:55.7px;width:17.8px;height:7.8px;background:#2e2e8f"></div>
 <div class="a" style="left:103px;top:49.5px;width:3px;height:6px;background:#111"></div>
 <div class="a" style="left:118.4px;top:53px;width:4.4px;height:1px;background:#222"></div>
 <div class="a" style="left:122.8px;top:37.7px;width:8.2px;height:32px;background:#009a9a"></div>
 <div class="a" style="left:131px;top:53px;width:5.6px;height:1px;background:#222"></div>
 <div class="a" style="left:136.6px;top:37.7px;width:8.4px;height:32px;background:#009a9a"></div>
</div>
<!-- chat overlay on thumbnails -->
<div class="a" style="left:8px;top:564px;width:119px;height:24px;background:rgba(58,58,58,0.85);border-radius:6px"></div>
<div class="a" style="left:14px;top:570px;width:13px;height:13px;border-radius:50%;background:#e8e8e8"></div>
<svg style="left:14px;top:570px" width="13" height="13" viewBox="0 0 13 13"><circle cx="4.5" cy="5" r="0.9" fill="#333"/><circle cx="8.5" cy="5" r="0.9" fill="#333"/><path d="M3.5 7.5 C4.5 10 8.5 10 9.5 7.5 Z" fill="#333"/></svg>
<div class="a" style="left:33px;top:568px;width:1px;height:16px;background:#555"></div>
<div class="t" style="left:38px;top:570px;font-size:10.5px;color:#9a9a9a">说点什么...</div>
<div class="a" style="left:102px;top:568px;width:1px;height:16px;background:#555"></div>
<svg style="left:112px;top:572px" width="6" height="9" viewBox="0 0 6 9"><path d="M5 0.5 L1 4.5 L5 8.5" fill="none" stroke="#ccc" stroke-width="1.1"/></svg>
<svg style="left:99px;top:622px" width="11" height="11" viewBox="0 0 11 11"><path d="M5.5 0 V11 M0 5.5 H11" stroke="#ddd" stroke-width="1.3"/></svg>
<!-- ===== SLIDE ===== -->
<div class="a" style="left:395px;top:134px;width:632px;height:474px;background:linear-gradient(#f5f5f5 0,#fcfcfc 10px,#fff 20px)"></div>
<div class="a" style="left:398px;top:205px;width:231px;height:30px;background:#bdbdbd;filter:blur(1px)"></div>
<div class="a" style="left:395px;top:202px;width:231px;height:30px;background:#1f1d6b"></div>
<div class="t" style="left:446px;top:206px;font-size:20px;color:#fff;letter-spacing:0.6px">NVIC基本结构</div>
<!-- diagram -->
<div class="a" style="left:502px;top:246px;width:426px;height:278px;background:#bde0e3;border:1px solid #8fb3b6"></div>
<div class="a" style="left:648px;top:262px;width:252px;height:232px;background:#37339a;border:1px solid #2a2580"></div>
<div class="a" style="left:664px;top:290px;width:106px;height:175px;background:#009a9a;border:1px solid #1e5e7a"></div>
<div class="a" style="left:795px;top:335px;width:88px;height:85px;background:#009a9a;border:1px solid #1e5e7a"></div>
<div class="t" style="left:795px;top:368px;width:88px;text-align:center;font-size:18.5px;color:#fff">CPU</div>
<div class="t" style="left:670px;top:379px;font-size:11px;color:#fff">NVIC</div>
<!-- priority boxes -->
<div class="a" style="left:680px;top:316px;width:76px;height:24px;background:#2e2e8f;border:1px solid #22226a"></div>
<div class="t" style="left:680px;top:324px;width:76px;text-align:center;font-size:8.8px;color:#fff">优先级0</div>
<div class="a" style="left:680px;top:344px;width:76px;height:24px;background:#2e2e8f;border:1px solid #22226a"></div>
<div class="t" style="left:680px;top:352px;width:76px;text-align:center;font-size:8.8px;color:#fff">优先级1</div>
<div class="a" style="left:680px;top:413px;width:76px;height:24px;background:#2e2e8f;border:1px solid #22226a"></div>
<div class="t" style="left:680px;top:421px;width:76px;text-align:center;font-size:8.8px;color:#fff">优先级15</div>
<!-- inputs -->
<div class="a" style="left:529px;top:297px;width:57px;height:29px;background:#2e2e8f;border:1px solid #23237a"></div>
<div class="t" style="left:529px;top:306px;width:57px;text-align:center;font-size:12.5px;color:#fff">EXTI</div>
<div class="a" style="left:529px;top:338px;width:57px;height:30px;background:#2e2e8f;border:1px solid #23237a"></div>
<div class="t" style="left:529px;top:348px;width:57px;text-align:center;font-size:12.5px;color:#fff">TIM</div>
<div class="a" style="left:529px;top:380px;width:57px;height:29px;background:#2e2e8f;border:1px solid #23237a"></div>
<div class="t" style="left:529px;top:389px;width:57px;text-align:center;font-size:12.5px;color:#fff">ADC</div>
<div class="a" style="left:529px;top:421px;width:57px;height:29px;background:#2e2e8f;border:1px solid #23237a"></div>
<div class="t" style="left:529px;top:430px;width:57px;text-align:center;font-size:12px;color:#fff">USART</div>
<svg style="left:500px;top:240px" width="440" height="290" viewBox="500 240 440 290">
 <g stroke="#000" stroke-width="2" fill="none">
  <path d="M586 312 H656 M586 353 H656 M586 395 H656 M586 436 H656 M770 377 H788"/>
  <path d="M614 318 L622 305 M614 359 L622 346 M614 401 L622 388 M614 442 L622 429" stroke-width="1.5"/>
 </g>
 <g fill="#000">
  <path d="M655 308.2 L664 312 L655 315.8 Z M655 349.2 L664 353 L655 356.8 Z M655 391.2 L664 395 L655 398.8 Z M655 432.2 L664 436 L655 439.8 Z M787 373.2 L796 377 L787 380.8 Z"/>
  <circle cx="712.5" cy="395" r="0.9"/><circle cx="712.5" cy="400" r="0.9"/><circle cx="712.5" cy="405" r="0.9"/>
  <circle cx="731.5" cy="395" r="0.9"/><circle cx="731.5" cy="400" r="0.9"/><circle cx="731.5" cy="405" r="0.9"/>
 </g>
 <g fill="#333">
  <circle cx="552.5" cy="477" r="0.9"/><circle cx="552.5" cy="482.5" r="0.9"/><circle cx="552.5" cy="488" r="0.9"/>
  <circle cx="571.8" cy="477" r="0.9"/><circle cx="571.8" cy="482.5" r="0.9"/><circle cx="571.8" cy="488" r="0.9"/>
 </g>
 <!-- cursor -->
 <path d="M638.5 271.5 V285 L641.5 282 L644 287.5 L646 286.5 L643.5 281 L647.5 281 Z" fill="#fff" stroke="#333" stroke-width="0.9"/>
</svg>

<!-- ===== CHAT PANEL ===== -->
<div class="a" style="left:1089px;top:240px;width:28px;height:28px;background:#2b2b2b;border-radius:2px"></div>
<svg style="left:1099px;top:246px" width="10" height="15" viewBox="0 0 10 15"><rect x="2.5" y="0.5" width="5" height="9" rx="2.5" fill="#1ec27a"/><path d="M0.8 6.5 C0.8 12 9.2 12 9.2 6.5 M5 11 V14 M2.5 14 H7.5" fill="none" stroke="#aaa" stroke-width="0.9"/></svg>
<div class="a" style="left:1117px;top:142px;width:152px;height:399px;background:#fff"></div>
<!-- msg1 -->
<svg style="left:1131px;top:208px" width="27" height="27" viewBox="0 0 27 27"><defs><radialGradient id="moon" cx="50%" cy="45%" r="55%"><stop offset="0" stop-color="#f6ecc6"/><stop offset="0.7" stop-color="#eadcaa"/><stop offset="1" stop-color="#d8c898"/></radialGradient></defs><circle cx="13.5" cy="13.5" r="13" fill="#2c4f8e"/><circle cx="13.5" cy="13" r="11.4" fill="url(#moon)"/><path d="M1.5 17 C4 26 23 26 25.5 17 C23 23 4 23 1.5 17 Z" fill="#0e1a40"/><rect x="12.4" y="19" width="2" height="5" fill="#101830"/></svg>
<div class="t" style="left:1164px;top:210px;font-size:10px;color:#444">邵彦嘉</div>
<div class="a" style="left:1164px;top:228px;width:60px;height:34px;background:#eceef2;border-radius:5px"></div>
<div class="t" style="left:1171px;top:240px;font-size:12px;color:#222">好的好的</div>
<!-- msg2 -->
<svg style="left:1131px;top:302px" width="27" height="27" viewBox="0 0 27 27"><defs><clipPath id="av2"><circle cx="13.5" cy="13.5" r="13.2"/></clipPath></defs><g clip-path="url(#av2)"><rect width="27" height="27" fill="#f6e4ea"/><path d="M0 0 H9 L6 16 H0 Z" fill="#5ab8e0"/><path d="M9 0 H17 L19 17 H6 Z" fill="#f4c8d4"/><path d="M17 0 H27 V18 H19 Z" fill="#c4e2f4"/><path d="M15 0 H20 L19 8 Z" fill="#7ac8e8"/><rect x="12" y="12" width="15" height="1.2" fill="#fff" opacity="0.8"/><path d="M0 17 H27 V27 H0 Z" fill="#f8e8ee"/></g></svg>
<div class="t" style="left:1164px;top:305px;font-size:10px;color:#444">掏天祝访</div>
<div class="a" style="left:1164px;top:323px;width:37px;height:33px;background:#eceef2;border-radius:5px"></div>
<div class="t" style="left:1171px;top:334px;font-size:12px;color:#222">可以</div>
<!-- collapse tab -->
<div class="a" style="left:1242px;top:327px;width:30px;height:52px;background:#7a7a7a;border-radius:6px 0 0 6px"></div>
<svg style="left:1251px;top:347px" width="7" height="12" viewBox="0 0 7 12"><path d="M6 0.8 L1.2 6 L6 11.2" fill="none" stroke="#fff" stroke-width="1.8"/></svg>
<!-- msg3 -->
<svg style="left:1133px;top:371px" width="22" height="21" viewBox="0 0 22 21"><g fill="none" stroke="#1a1a1a" stroke-width="1.1"><path d="M8.5 11.5 C6 8 8 1.5 14 1.5 C20 1.5 21 8 18.5 11 C20 13 19 15 17 15 L14 14"/><path d="M3 17.5 L6 13 L13 14.5 L11 19.5 Z"/><path d="M8 15 L10 16"/><circle cx="3.5" cy="3" r="1.6"/><path d="M3 6 V8"/></g><g fill="#1a1a1a"><path d="M11 7 C12 6.5 12.5 6.5 13 7"/><path d="M15.5 7 C16 6.5 16.5 6.5 17 7"/><path d="M11.5 9 C12 12 16 12 16.5 9 Z"/><path d="M5 9.5 C6 9 7.5 10 7 12 C6 12 5 11 5 9.5 Z"/></g></svg>
<div class="t" style="left:1164px;top:372px;font-size:10px;color:#444">sakura最好了</div>
<div class="a" style="left:1164px;top:390px;width:95px;height:33px;background:#eceef2;border-radius:5px 5px 3px 3px"></div>
<div class="t" style="left:1171px;top:401px;font-size:12px;color:#222">我刘学烨看见了</div>
<div class="a" style="left:1117px;top:423px;width:152px;height:1px;background:#e6e6e6"></div>
<div class="t" style="left:1128px;top:435px;font-size:11.5px;color:#444">发送至</div>
<svg style="left:1170px;top:435px" width="12" height="11" viewBox="0 0 12 11"><circle cx="7.5" cy="3" r="2.4" fill="#555"/><path d="M3.5 10.5 C3.5 6.5 11.5 6.5 11.5 10.5 Z" fill="#555"/><circle cx="4.5" cy="3.5" r="2.5" fill="#333" stroke="#fff" stroke-width="0.7"/><path d="M0 10.5 C0 6.5 9 6.5 9 10.5 Z" fill="#333" stroke="#fff" stroke-width="0.7"/></svg>
<div class="t" style="left:1186px;top:435px;font-size:12px;color:#333">所有人</div>
<svg style="left:1226px;top:438px" width="9" height="6" viewBox="0 0 9 6"><path d="M0.7 0.7 L4.5 4.7 L8.3 0.7" fill="none" stroke="#444" stroke-width="1.2"/></svg>
<div class="t" style="left:1128px;top:462px;font-size:11px;color:#aaa">请输入消息...</div>

<!-- ===== STATUS BAR ===== -->
<div class="a" style="left:0;top:652px;width:1269px;height:19px;background:#171717"></div>
<div class="t" style="left:8px;top:657px;font-size:10px;color:#cfcfcf">幻灯片 20 / 24</div>
<div class="a" style="left:80px;top:654px;width:1px;height:14px;background:#333"></div>
<svg style="left:93px;top:655px" width="12" height="12" viewBox="0 0 12 12"><path d="M3.5 0.6 L0.6 2.5 L2 5 L2.5 4.5 V11.4 H7 M8.5 0.6 L11.4 2.5 L10 5 M3.5 0.6 C4.5 2 7.5 2 8.5 0.6" fill="none" stroke="#ccc" stroke-width="1"/><circle cx="9" cy="9" r="1.8" fill="none" stroke="#ccc" stroke-width="0.9"/></svg>
<div class="t" style="left:109px;top:657px;font-size:10px;color:#cfcfcf">默认设计模板</div>
<svg style="left:697px;top:655px" width="12" height="12" viewBox="0 0 12 12"><path d="M2 4 L6 1 L10 4 V8 C10 10 8 11.5 6 11.5 C3 11.5 1 9.5 1.5 7" fill="none" stroke="#bbb" stroke-width="1"/><path d="M2.5 4.5 H9.5" stroke="#bbb"/></svg>
<div class="t" style="left:713px;top:657px;font-size:10px;color:#cfcfcf">智能美化</div>
<svg style="left:755px;top:660px" width="6" height="4" viewBox="0 0 6 4"><path class="chev" d="M0.5 0.5 L3 3 L5.5 0.5"/></svg>
<div class="a" style="left:773px;top:655px;width:1px;height:13px;background:#333"></div>
<svg style="left:786px;top:655px" width="11" height="11" viewBox="0 0 11 11"><path d="M0 1 H6 M0 5.5 H10 M0 10 H10 M7.5 0 L8.5 2 L10 0" fill="none" stroke="#bbb" stroke-width="1"/></svg>
<div class="t" style="left:801px;top:657px;font-size:10px;color:#cfcfcf">备注</div>
<svg style="left:825px;top:660px" width="6" height="4" viewBox="0 0 6 4"><path class="chev" d="M0.5 0.5 L3 3 L5.5 0.5"/></svg>
<svg style="left:847px;top:655px" width="12" height="12" viewBox="0 0 12 12"><path d="M5 9.5 H0.6 V0.6 H10.4 V5.5 M2 9.5 V11.5 L4 9.5" fill="none" stroke="#bbb" stroke-width="1"/><path d="M9 7.5 V11.5 M7 9.5 H11" stroke="#bbb" stroke-width="1"/></svg>
<div class="t" style="left:863px;top:657px;font-size:10px;color:#cfcfcf">批注</div>
<div class="a" style="left:894px;top:655px;width:1px;height:13px;background:#333"></div>
<div class="a" style="left:902px;top:652px;width:19px;height:18px;background:#2c2c2c;border-radius:2px"></div>
<svg style="left:905px;top:655px" width="13" height="11" viewBox="0 0 13 11"><rect x="0.6" y="0.6" width="11.8" height="9.8" rx="1" fill="none" stroke="#bbb" stroke-width="1"/><path d="M3.5 0.6 V10.4" stroke="#bbb"/></svg>
<svg style="left:932px;top:655px" width="12" height="11" viewBox="0 0 12 11"><g fill="none" stroke="#aaa" stroke-width="1"><rect x="0.5" y="0.5" width="4.5" height="4" rx="0.8"/><rect x="7" y="0.5" width="4.5" height="4" rx="0.8"/><rect x="0.5" y="6.5" width="4.5" height="4" rx="0.8"/><rect x="7" y="6.5" width="4.5" height="4" rx="0.8"/></g></svg>
<svg style="left:958px;top:655px" width="13" height="11" viewBox="0 0 13 11"><path d="M6.5 2 C5 0.5 2 0.5 0.5 1.5 V10 C2 9 5 9 6.5 10.5 C8 9 11 9 12.5 10 V1.5 C11 0.5 8 0.5 6.5 2 V10.5" fill="none" stroke="#aaa" stroke-width="1"/></svg>
<div class="a" style="left:981px;top:655px;width:1px;height:13px;background:#333"></div>
<div class="a" style="left:990px;top:654px;width:17px;height:15px;background:#e8691f;border-radius:2px"></div>
<svg style="left:995px;top:658px" width="7" height="8" viewBox="0 0 7 8"><path d="M0.5 0 L6.5 4 L0.5 8 Z" fill="#222"/></svg>
<svg style="left:1012px;top:660px" width="6" height="4" viewBox="0 0 6 4"><path class="chev" d="M0.5 0.5 L3 3 L5.5 0.5"/></svg>
<div class="a" style="left:1029px;top:655px;width:1px;height:13px;background:#333"></div>
<svg style="left:1040px;top:655px" width="12" height="12" viewBox="0 0 12 12"><path d="M0.6 3.5 V0.6 H3.5 M8.5 0.6 H11.4 V3.5 M11.4 8.5 V11.4 H8.5 M3.5 11.4 H0.6 V8.5" fill="none" stroke="#bbb" stroke-width="1"/><rect x="3" y="3" width="6" height="6" rx="1" fill="none" stroke="#bbb"/></svg>
<div class="t" style="left:1071px;top:657px;font-size:10px;color:#cfcfcf">79%</div>
<svg style="left:1103px;top:660px" width="6" height="4" viewBox="0 0 6 4"><path class="chev" d="M0.5 0.5 L3 3 L5.5 0.5"/></svg>
<div class="a" style="left:1123px;top:661px;width:11px;height:1.5px;background:#ccc"></div>
<div class="a" style="left:1145px;top:661px;width:88px;height:1px;background:#555"></div>
<div class="a" style="left:1145px;top:661px;width:33px;height:1.5px;background:#3a7ad8"></div>
<div class="a" style="left:1174px;top:657px;width:9px;height:9px;border-radius:50%;background:#fff;border:2px solid #ccc"></div>
<svg style="left:1243px;top:656px" width="11" height="11" viewBox="0 0 11 11"><path d="M5.5 0 V11 M0 5.5 H11" stroke="#ddd" stroke-width="1.4"/></svg>
<div class="a" style="left:1265px;top:631px;width:4px;height:78px;background:#1fd07a"></div>
<div class="a" style="left:0;top:631px;width:2px;height:78px;background:#1fd07a"></div>
<!-- ===== TASKBAR ===== -->
<div class="a" style="left:0;top:671px;width:1269px;height:38px;background:linear-gradient(90deg,#d6d8e4 0,#dcdce6 40%,#e4dde2 60%,#dcdce4 100%)"></div>
<div class="a" style="left:0;top:671px;width:2px;height:38px;background:#1fd07a"></div>
<div class="a" style="left:1265px;top:671px;width:4px;height:38px;background:#1fd07a"></div>
<div class="a" style="left:0;top:707px;width:77px;height:2px;background:#1fd07a"></div>
<div class="a" style="left:1190px;top:707px;width:79px;height:2px;background:#1fd07a"></div>
<!-- weather -->
<svg style="left:13px;top:679px" width="22" height="22" viewBox="0 0 22 22"><path d="M4 14 C1.5 14 0.5 11.5 1.5 10 C2.5 8.5 4.5 8.5 5 9 C5.5 5 11 3 14.5 6 C18 5.5 21 8 20.5 11 C21 13 20 14 18.5 14 Z" fill="#b4bccb"/><path d="M1 16.5 H8 M11 16.5 H21 M1 20 H21" stroke="#8e9ab0" stroke-width="1.6"/></svg>
<div class="a" style="left:10px;top:684px;width:80px;height:2px;background:#ef6a96"></div>
<div class="a" style="left:90px;top:684px;width:14px;height:2px;background:#f0f0f4"></div>
<div class="a" style="left:24px;top:677px;width:12px;height:12px;border-radius:50%;background:#d8322a"></div>
<div class="t" style="left:27px;top:678px;font-size:9px;color:#fff;width:6px;text-align:center">1</div>
<div class="t" style="left:44px;top:680px;font-size:10px;color:#222">5°C</div>
<div class="t" style="left:41px;top:693px;font-size:10px;color:#222">雾</div>
<!-- start -->
<svg style="left:348px;top:682px" width="20" height="19" viewBox="0 0 20 19"><g fill="#1a7ee8"><rect x="0" y="0" width="9.5" height="9" rx="0.5"/><rect x="10.5" y="0" width="9.5" height="9" rx="0.5"/><rect x="0" y="10" width="9.5" height="9" rx="0.5"/><rect x="10.5" y="10" width="9.5" height="9" rx="0.5"/></g></svg>
<!-- search -->
<div class="a" style="left:380px;top:679px;width:180px;height:25px;background:#f4f3f6;border-radius:13px;border:1px solid #e0dfe4"></div>
<svg style="left:389px;top:685px" width="13" height="13" viewBox="0 0 13 13"><circle cx="5.3" cy="5.3" r="4.3" fill="none" stroke="#222" stroke-width="1.6"/><path d="M8.5 8.5 L12 12" stroke="#222" stroke-width="1.8"/></svg>
<div class="t" style="left:409px;top:685px;font-size:12px;color:#222">搜索</div>
<svg style="left:519px;top:679px" width="40" height="25" viewBox="0 0 40 25"><path d="M1 24 C5 19 12 18 18 20 C24 16 33 16 39 20 V24 Z" fill="#a8cce4"/><path d="M3 23 C8 20 14 20 20 22 C26 19 32 19 37 22" stroke="#fff" stroke-width="1" fill="none"/><path d="M14 20 L15.5 6 H20.5 L22 20 Z" fill="#f4f6f8" stroke="#9aaab8" stroke-width="0.6"/><rect x="15" y="10" width="6" height="3.5" fill="#2a9a5a"/><rect x="15.5" y="3.5" width="5" height="2.5" fill="#2a7050"/><path d="M15 3.5 L18 0.5 L21 3.5 Z" fill="#1e5a40"/><path d="M8 22 L12 17 L16 22 Z" fill="#7ab0d0" opacity="0.7"/></svg>
<!-- task view -->
<svg style="left:571px;top:682px" width="17" height="17" viewBox="0 0 17 17"><rect x="5" y="0" width="12" height="11" fill="#e8e8ea" stroke="#c8c8cc" stroke-width="0.8"/><rect x="0" y="5" width="12" height="12" fill="#1e1e1e"/></svg>
<!-- edge -->
<svg style="left:607px;top:680px" width="21" height="21" viewBox="0 0 21 21"><circle cx="10.5" cy="10.5" r="10" fill="#1a8ad8"/><path d="M2 14 C1 6 8 1 14 3 C18 4.5 20 8 20 11 H7 C7 15 11 17 16 16 C13 20 5 20 2 14 Z" fill="#3fd07a"/><path d="M7 11 C7 7 13 6 14 10 Z" fill="#1a8ad8"/><path d="M2 14 C3 18 8 21 13 20 C8 19 6 14 8 10 C5 10 3 12 2 14 Z" fill="#0a5aa8"/></svg>
<div class="a" style="left:614px;top:704px;width:6px;height:3px;border-radius:2px;background:#777"></div>
<!-- folder -->
<svg style="left:643px;top:681px" width="21" height="19" viewBox="0 0 21 19"><path d="M0 2 C0 1 1 0 2 0 H7 L9 2 H19 C20 2 21 3 21 4 V17 C21 18 20 19 19 19 H2 C1 19 0 18 0 17 Z" fill="#f0b828"/><path d="M0 6 H21 V17 C21 18 20 19 19 19 H2 C1 19 0 18 0 17 Z" fill="#ffd454"/><rect x="6" y="13" width="9" height="3" fill="#2a7ad8"/></svg>
<div class="a" style="left:650px;top:704px;width:6px;height:3px;border-radius:2px;background:#777"></div>
<!-- store -->
<svg style="left:680px;top:681px" width="19" height="19" viewBox="0 0 19 19"><path d="M6 4 C6 0 13 0 13 4" fill="none" stroke="#2a6ac8" stroke-width="1.5"/><rect x="0" y="3" width="19" height="16" rx="2.5" fill="#1e5aa8"/><rect x="5" y="7" width="4" height="4" fill="#f25022"/><rect x="10" y="7" width="4" height="4" fill="#7fba00"/><rect x="5" y="12" width="4" height="4" fill="#00a4ef"/><rect x="10" y="12" width="4" height="4" fill="#ffb900"/></svg>
<!-- settings -->
<svg style="left:718px;top:682px" width="17" height="17" viewBox="0 0 17 17"><circle cx="8.5" cy="8.5" r="6.5" fill="none" stroke="#3a8ae0" stroke-width="3" stroke-dasharray="2.5 1.5"/><circle cx="8.5" cy="8.5" r="3.5" fill="#8ac0ee"/><path d="M7 8 L13 14" stroke="#2a6ac0" stroke-width="2"/></svg>
<!-- WPS active -->
<div class="a" style="left:747px;top:675px;width:32px;height:31px;background:rgba(255,255,255,0.55);border-radius:4px"></div>
<svg style="left:753px;top:684px" width="20" height="14" viewBox="0 0 20 14"><path d="M0 0.5 H4.5 L7.5 8.5 L10 2.5 L12.5 8.5 L15.5 0.5 H20 L14.5 13.5 H11 L10 11 L9 13.5 H5.5 Z" fill="#e53a24"/><path d="M10 2.5 L12.5 8.5 L15.5 0.5 H20 L14.5 13.5 H11 Z" fill="#f05a2a"/></svg>
<div class="a" style="left:756px;top:704px;width:14px;height:3px;border-radius:2px;background:#5a6270"></div>
<div class="a" style="left:760px;top:707px;width:38px;height:2px;background:#ee8aaa"></div>
<!-- feishu-like blue -->
<svg style="left:790px;top:682px" width="18" height="18" viewBox="0 0 18 18"><rect x="0" y="0" width="18" height="18" rx="3" fill="#1c7af0"/><path d="M2 13 L7 6 L10 10 L12 7 L16 13 Z" fill="#fff"/></svg>
<div class="a" style="left:795px;top:704px;width:6px;height:3px;border-radius:2px;background:#777"></div>
<!-- QQ -->
<div class="a" style="left:826px;top:681px;width:18px;height:19px;background:#fff;border-radius:3px"></div>
<svg style="left:827px;top:681px" width="16" height="19" viewBox="0 0 16 19"><ellipse cx="8" cy="9" rx="5.5" ry="7.5" fill="#111"/><ellipse cx="8" cy="12" rx="3.8" ry="4.5" fill="#fff"/><path d="M3 9 H13 L12 11 H4 Z" fill="#e02020"/><path d="M5 6.5 C6 5 10 5 11 6.5 L8 8 Z" fill="#f0b020"/><path d="M2 17 C4 15 6 16 7 18 M14 17 C12 15 10 16 9 18" stroke="#f0b020" stroke-width="2" fill="none"/></svg>
<div class="a" style="left:831px;top:704px;width:6px;height:3px;border-radius:2px;background:#777"></div>
<!-- vim -->
<svg style="left:863px;top:681px" width="18" height="19" viewBox="0 0 18 19"><rect x="0" y="0" width="18" height="19" rx="2" fill="#2a7a3a"/><path d="M3 2 L9 16 L15 2" fill="none" stroke="#e8f0e8" stroke-width="1.6"/><text x="10" y="17" font-size="6" fill="#fff">s</text></svg>
<div class="a" style="left:868px;top:704px;width:6px;height:3px;border-radius:2px;background:#777"></div>
<!-- OBS -->
<svg style="left:899px;top:681px" width="18" height="18" viewBox="0 0 18 18"><circle cx="9" cy="9" r="8.5" fill="#1a1a1a"/><g fill="none" stroke="#e8e8e8" stroke-width="1.4"><path d="M5 5.5 C7 3 11 3.5 11.5 6"/><path d="M13.5 9 C14 12 11 14.5 8.5 13.5"/><path d="M4.5 12 C3 10 3.5 7 5.5 6"/></g><circle cx="9" cy="9" r="1.6" fill="#e8e8e8"/></svg>
<div class="a" style="left:910px;top:678px;width:10px;height:10px;border-radius:50%;background:#f01a24"></div>
<div class="a" style="left:905px;top:704px;width:6px;height:3px;border-radius:2px;background:#777"></div>
<!-- tray -->
<svg style="left:959px;top:687px" width="10" height="6" viewBox="0 0 10 6"><path d="M0.8 5.2 L5 1 L9.2 5.2" fill="none" stroke="#222" stroke-width="1.3"/></svg>
<svg style="left:983px;top:685px" width="14" height="10" viewBox="0 0 14 10"><path d="M3 9.3 H11 C13.5 9.3 13.8 6 12 5 C12 2 9 0.5 6.5 2 C4 1 1.5 3 2 5.5 C0 6.5 0.5 9.3 3 9.3 Z" fill="none" stroke="#333" stroke-width="1.1"/></svg>
<svg style="left:1010px;top:684px" width="14" height="14" viewBox="0 0 14 14"><circle cx="7" cy="7" r="6.5" fill="#f0c020"/><path d="M1 7 C2 3 6 1 10 2 C8 4 5 6 1 7 Z M13 7 C12 11 8 13 4 12 C6 10 9 8 13 7 Z" fill="#2aa040"/><path d="M7 4 V10 M4 7 H10" stroke="#c02020" stroke-width="1.5"/></svg>
<svg style="left:1039px;top:684px" width="10" height="15" viewBox="0 0 10 15"><rect x="2.8" y="0.6" width="4.4" height="8.5" rx="2.2" fill="none" stroke="#222" stroke-width="1.1"/><path d="M0.6 7 C0.6 12 9.4 12 9.4 7 M5 11.5 V14.5" fill="none" stroke="#222" stroke-width="1.1"/></svg>
<div class="t" style="left:1062px;top:685px;font-size:13px;color:#222">中</div>
<div class="t" style="left:1095px;top:685px;font-size:13px;color:#222">拼</div>
<svg style="left:1126px;top:685px" width="14" height="11" viewBox="0 0 14 11"><path d="M0.5 4 C4 0.5 10 0.5 13.5 4 M2.5 6 C5 3.5 9 3.5 11.5 6 M4.5 8 C6 6.8 8 6.8 9.5 8" fill="none" stroke="#222" stroke-width="1.1"/><circle cx="7" cy="10" r="1" fill="#222"/></svg>
<svg style="left:1146px;top:685px" width="14" height="11" viewBox="0 0 14 11"><path d="M0.6 3.5 H3 L6.5 0.6 V10.4 L3 7.5 H0.6 Z" fill="none" stroke="#222" stroke-width="1.1"/><path d="M8.5 3.5 C9.5 4.5 9.5 6.5 8.5 7.5 M10.5 1.5 C12.5 3.5 12.5 7.5 10.5 9.5" fill="none" stroke="#222" stroke-width="1.1"/></svg>
<svg style="left:1165px;top:685px" width="15" height="10" viewBox="0 0 15 10"><rect x="0.6" y="2" width="12.5" height="7.4" rx="1.2" fill="none" stroke="#222" stroke-width="1.1"/><rect x="2" y="3.5" width="9.5" height="4.5" fill="#222"/><rect x="13.5" y="4" width="1.3" height="3.5" fill="#222"/><path d="M2 0 L4 2" stroke="#222"/></svg>
<div class="t" style="left:1210px;top:679px;font-size:10.5px;color:#222">19:42</div>
<div class="t" style="left:1193px;top:693px;font-size:10.5px;color:#222">2024/2/1</div>
<svg style="left:1240px;top:684px" width="15" height="15" viewBox="0 0 15 15"><path d="M2 11 H12 C11 10 10.5 9 10.5 7 V5.5 C10.5 3 9 1.5 7 1.5 C5 1.5 3.5 3 3.5 5.5 V7 C3.5 9 3 10 2 11 Z" fill="#222"/><path d="M5.5 12.5 C5.5 14 8.5 14 8.5 12.5" fill="#222"/><text x="9" y="5" font-size="5" fill="#222">z</text></svg>
</body></html>
